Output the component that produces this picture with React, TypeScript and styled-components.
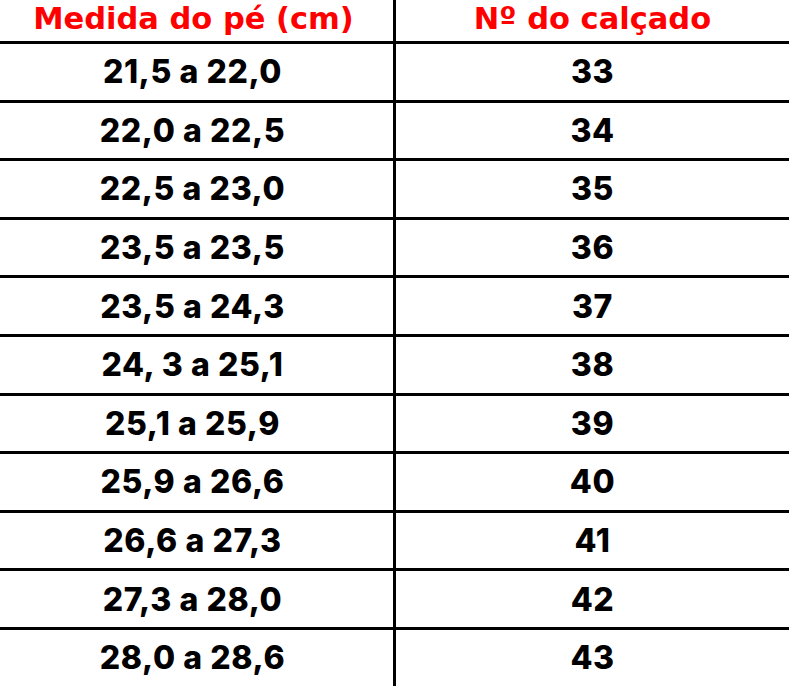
import styled, { createGlobalStyle } from 'styled-components'

const rows: [string, string][] = [
	['21,5 a 22,0', '33'],
	['22,0 a 22,5', '34'],
	['22,5 a 23,0', '35'],
	['23,5 a 23,5', '36'],
	['23,5 a 24,3', '37'],
	['24, 3 a 25,1', '38'],
	['25,1 a 25,9', '39'],
	['25,9 a 26,6', '40'],
	['26,6 a 27,3', '41'],
	['27,3 a 28,0', '42'],
	['28,0 a 28,6', '43'],
]

function App() {
	return (
		<>
			<GlobalStyle />
			<Table>
				<HeaderRow>
					<HeadCell className="left">Medida do pé (cm)</HeadCell>
					<HeadCell>Nº do calçado</HeadCell>
				</HeaderRow>
				{rows.map(([size, number]) => (
					<Row key={number}>
						<Cell className="left">{size}</Cell>
						<Cell>{number}</Cell>
					</Row>
				))}
			</Table>
		</>
	)
}

const GlobalStyle = createGlobalStyle`
	html, body {
		margin: 0;
		padding: 0;
		background: #fff;
		overflow: hidden;
	}
`

const Table = styled.div`
	width: 789px;
	height: 688px;
	display: flex;
	flex-direction: column;
	overflow: hidden;
`

const HeaderRow = styled.div`
	display: grid;
	grid-template-columns: 396px 1fr;
	height: 41px;
	flex: none;
`

const Row = styled.div`
	display: grid;
	grid-template-columns: 396px 1fr;
	height: 58.6px;
	flex: none;
	box-sizing: border-box;
	border-top: 3px solid #000;
`

const HeadCell = styled.div`
	display: flex;
	align-items: center;
	justify-content: center;
	padding-bottom: 4px;
	box-sizing: border-box;
	font-family: 'DejaVu Sans', sans-serif;
	font-weight: bold;
	font-size: 30.5px;
	color: #ff0000;
	white-space: nowrap;

	&.left {
		border-right: 3px solid #000;
		padding-right: 6px;
	}
`

const Cell = styled.div`
	display: flex;
	align-items: center;
	justify-content: center;
	box-sizing: border-box;
	font-family: Inter, Roboto, 'Liberation Sans', sans-serif;
	font-weight: 800;
	font-size: 32px;
	letter-spacing: 0.6px;
	color: #000;
	white-space: nowrap;

	&.left {
		border-right: 3px solid #000;
		padding-right: 8px;
	}
`

export default App
